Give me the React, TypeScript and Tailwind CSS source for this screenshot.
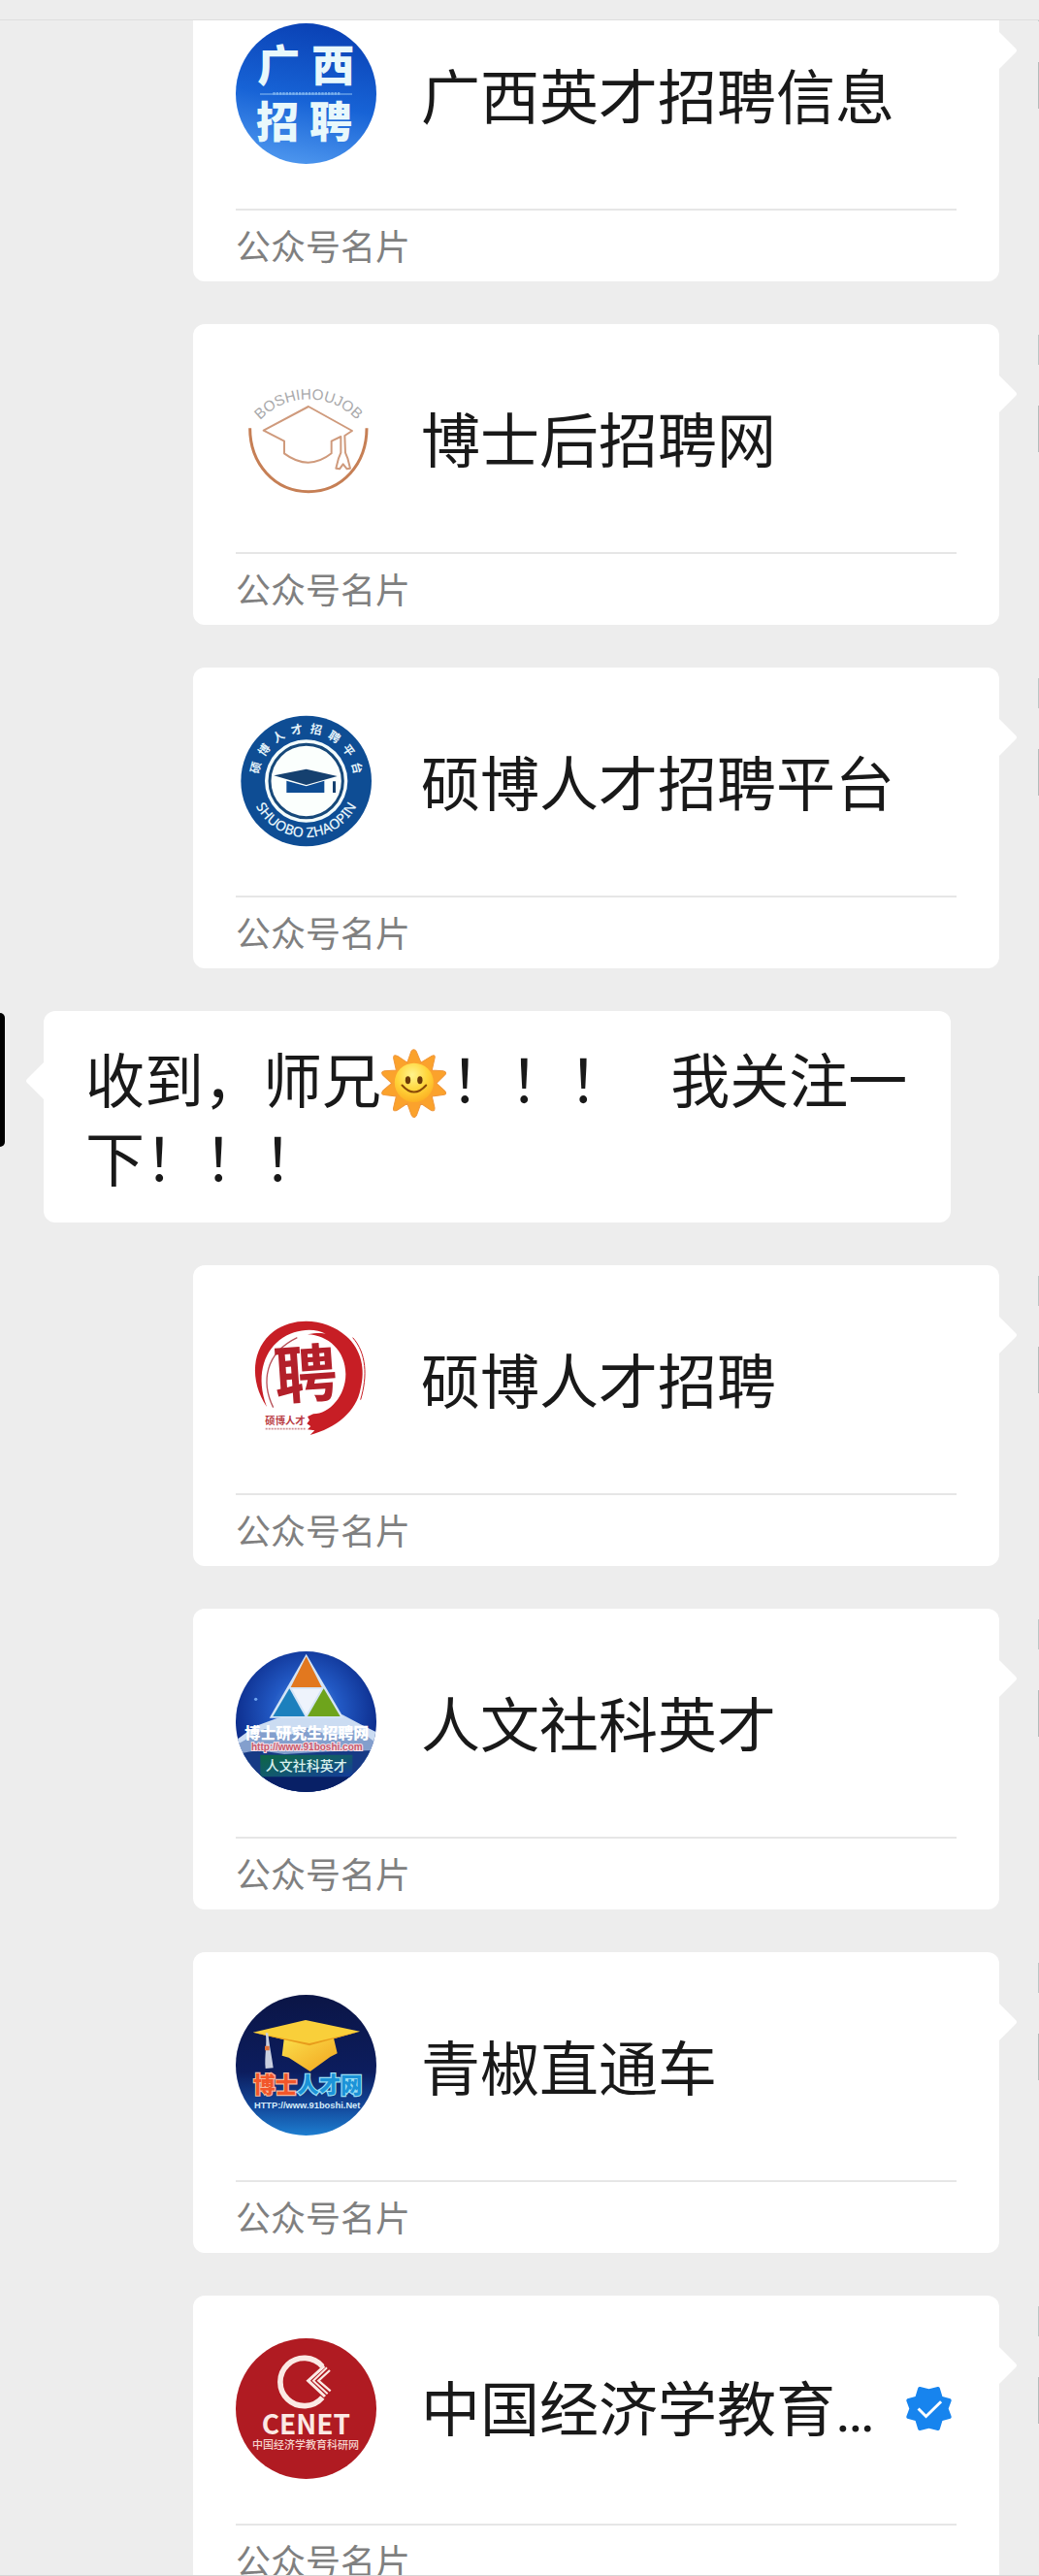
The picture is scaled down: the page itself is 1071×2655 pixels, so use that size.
import type { ReactNode } from 'react';

interface IAccount {
  id: string,
  name: string,
  logo: ReactNode,
  verified?: boolean,
  truncated?: boolean
}

const SANS = '"Noto Sans CJK SC", sans-serif';

const LogoSvg = ({ title, children }: { title: string, children: ReactNode }) => (
  <svg viewBox="0 0 435 435" className="size-[145px] shrink-0 rounded-full" role="img" aria-label={title} fontFamily={SANS}>
    {children}
  </svg>
);

const GuangxiLogo = () => (
  <LogoSvg title="广西招聘">
    <defs>
      <linearGradient id="guangxi" x1="0.6" y1="0" x2="0.4" y2="1">
        <stop offset="0" stopColor="#0a41b4" />
        <stop offset="0.55" stopColor="#1763d6" />
        <stop offset="1" stopColor="#4d96ee" />
      </linearGradient>
    </defs>
    <rect width="435" height="435" fill="url(#guangxi)" />
    <g fill="#e8f8fb" fontWeight="900" fontSize="132" textAnchor="middle">
      <text x="133" y="180">广</text>
      <text x="301" y="180">西</text>
      <text x="129" y="355">招</text>
      <text x="294" y="355">聘</text>
    </g>
    <path d="M75 219H360" stroke="#8fc0f2" strokeWidth="3" />
    <path d="M115 217H322" stroke="#8fc0f2" strokeWidth="8" strokeDasharray="7 3" opacity="0.7" />
  </LogoSvg>
);

const BoshihouLogo = () => (
  <LogoSvg title="BOSHIHOUJOB">
    <path id="boshihou-arc" d="M58 186A206 206 0 0 1 392 186" fill="none" />
    <text fontSize="46" fill="#a9a9ab" fontFamily='"Liberation Sans", sans-serif' textAnchor="middle">
      <textPath href="#boshihou-arc" startOffset="50%">BOSHIHOUJOB</textPath>
    </text>
    <g fill="none" strokeLinejoin="round">
      <path d="M44 190C44 300 120 386 225 386S405 300 405 190" stroke="#c67f55" strokeWidth="9" />
      <path
        d="M225 123L86 197L150 230V268Q225 324 296 268V230L325 216L325 266L318 283L310 314L321 316L332 301L344 316L354 314L346 283L339 266L337 213L360 198Z"
        stroke="#cf9a7c"
        strokeWidth="6"
      />
    </g>
  </LogoSvg>
);

const PlatformLogo = () => (
  <LogoSvg title="硕博人才招聘平台">
    <circle cx="218" cy="219" r="202" fill="#0e4d94" />
    <circle cx="218" cy="219" r="128" fill="#f3fcfc" />
    <circle cx="218" cy="219" r="113" fill="#fbfffd" stroke="#17497a" strokeWidth="9" />
    <g fill="#e4f3fa" fontSize="36" fontWeight="700" textAnchor="middle">
      {[...'硕博人才招聘平台'].map((char, i) => (
        <text key={char} x="218" y="70" transform={`rotate(${-75 + i * 21.5} 218 219)`}>{char}</text>
      ))}
    </g>
    <path id="shuobo-arc" d="M44 219A174 174 0 0 0 392 219" fill="none" />
    <text fontSize="43" fontWeight="500" fill="#e4f3fa" fontFamily='"Noto Sans", sans-serif' textAnchor="middle">
      <textPath href="#shuobo-arc" startOffset="50%">SHUOBO ZHAOPIN</textPath>
    </text>
    <path d="M157 218L218 235L274 218V255H157Z" fill="#0e4d94" />
    <path d="M118 202L218 182L314 204L218 231Z" fill="#15406f" />
    <path d="M300 220h9v35h-9z" fill="#15406f" />
  </LogoSvg>
);

const BrushLogo = () => (
  <LogoSvg title="聘 硕博人才">
    <path
      d="M96 306C42 225 48 125 118 72C185 25 282 34 342 88C388 128 402 190 386 250C374 320 310 372 230 393L244 379L222 376L232 366L220 358L228 347L222 336L240 328C290 328 340 272 340 205C340 132 285 84 222 82C250 76 270 78 278 80C240 60 180 66 135 100C85 140 62 215 96 306Z"
      fill="#c71e25"
    />
    <path d="M116 308C78 230 90 140 190 92" fill="none" stroke="#b8525a" strokeWidth="4" />
    <path d="M362 92C404 140 408 210 386 284" fill="none" stroke="#c71e25" strokeWidth="3" />
    <text x="216" y="276" fontSize="194" fontWeight="700" fill="#b3202a" textAnchor="middle" transform="rotate(-4 218 215)">聘</text>
    <text x="153" y="361" fontSize="31" fontWeight="700" fill="#b93a42" textAnchor="middle">硕博人才</text>
    <path d="M92 374H215" stroke="#cf8f94" strokeWidth="5" strokeDasharray="6 3" />
  </LogoSvg>
);

const HumanitiesLogo = () => (
  <LogoSvg title="博士研究生招聘网 人文社科英才">
    <defs>
      <radialGradient id="sky" cx="0.5" cy="0.42" r="0.6">
        <stop offset="0" stopColor="#6aa6ee" />
        <stop offset="0.4" stopColor="#2259c4" />
        <stop offset="1" stopColor="#06207c" />
      </radialGradient>
      <linearGradient id="banner" x1="0" y1="0" x2="1" y2="1">
        <stop offset="0" stopColor="#0d6645" />
        <stop offset="0.5" stopColor="#125a6c" />
        <stop offset="1" stopColor="#14399a" />
      </linearGradient>
    </defs>
    <rect width="435" height="435" fill="url(#sky)" />
    <path d="M0 275L60 232L125 208L200 190L330 196L385 225L435 250V350H0Z" fill="#cbdcf2" />
    <path d="M0 290L90 240L160 262L220 236L300 262L380 240L435 285V360H0Z" fill="#6485be" opacity="0.7" />
    <path d="M0 318L70 306L150 318L290 310L435 306V435H0Z" fill="#173a85" />
    <path d="M40 380H400V435H40Z" fill="#082066" />
    <circle cx="62" cy="148" r="5" fill="#6fa4ee" />
    <path d="M218 8L334 206H104Z" fill="#d4e4f6" />
    <path d="M218 16L266 111H170Z" fill="#e2781f" />
    <path d="M166 115L214 201H115Z" fill="#1c80bd" />
    <path d="M272 115L323 201H222Z" fill="#6ea41c" />
    <path d="M174 116H264L218 196Z" fill="#eef3fc" />
    <text x="220" y="271" fontSize="48" fontWeight="900" fill="#fff" textAnchor="middle">博士研究生招聘网</text>
    <text x="220" y="307" fontSize="30" fontWeight="700" fill="#c9596c" stroke="#f1dfe8" paintOrder="stroke" strokeWidth="6" fontFamily='"Liberation Sans", sans-serif' textAnchor="middle">
      http://www.91boshi.com
    </text>
    <path d="M76 320H361V388H76Z" fill="url(#banner)" />
    <text x="218" y="370" fontSize="42" fontWeight="500" fill="#d8f0ee" textAnchor="middle">人文社科英才</text>
  </LogoSvg>
);

const DoctorLogo = () => (
  <LogoSvg title="博士人才网">
    <defs>
      <linearGradient id="night" x1="0" y1="0" x2="0" y2="1">
        <stop offset="0" stopColor="#0b1546" />
        <stop offset="0.55" stopColor="#0c1d5e" />
        <stop offset="0.8" stopColor="#13499c" />
        <stop offset="1" stopColor="#1d7ed0" />
      </linearGradient>
      <linearGradient id="gold" x1="0" y1="0" x2="1" y2="1">
        <stop offset="0" stopColor="#fbe04c" />
        <stop offset="1" stopColor="#f2a41f" />
      </linearGradient>
    </defs>
    <rect width="435" height="435" fill="url(#night)" />
    <path d="M150 130L143 188L164 194L230 237L292 192L314 181L302 130Z" fill="url(#gold)" />
    <path d="M53 116L216 78L384 113L228 157Z" fill="#f9cf3a" />
    <path d="M53 116L228 157L384 113L228 150Z" fill="#e89c1c" />
    <path d="M92 118C98 150 88 190 92 228L116 226C112 190 104 160 100 118Z" fill="#c9cfdf" />
    <path d="M90 158h14v14h-14z" fill="#e0703a" />
    <g fontSize="67" fontWeight="900" paintOrder="stroke" strokeWidth="7">
      <text x="55" y="303" fill="#f2562a" stroke="#f6b79c">博士</text>
      <text x="190" y="303" fill="#1b93d8" stroke="#9be0f5">人才网</text>
    </g>
    <text x="221" y="350" fontSize="28" fontWeight="700" fill="#d5ecfa" fontFamily='"Liberation Sans", sans-serif' textAnchor="middle">
      HTTP://www.91boshi.Net
    </text>
  </LogoSvg>
);

const CenetLogo = () => (
  <LogoSvg title="CENET 中国经济学教育科研网">
    <rect width="435" height="435" fill="#b01b22" />
    <g fill="none" stroke="#fbe9e4">
      <path d="M268 87A74 74 0 1 0 268 183" strokeWidth="17" />
      <path d="M274 86L224 131L276 180" strokeWidth="9" />
      <path d="M282 91L240 131L284 172" strokeWidth="6" />
      <path d="M291 99L256 131L293 163" strokeWidth="7" />
    </g>
    <text x="217" y="298" fontSize="84" fontWeight="700" fill="#fbe9e4" textAnchor="middle">CENET</text>
    <text x="216" y="342" fontSize="33" fontWeight="500" fill="#f6d3cd" textAnchor="middle">中国经济学教育科研网</text>
  </LogoSvg>
);

const SunIcon = () => (
  <svg viewBox="0 0 200 212" className="inline-block align-middle w-[67px] h-[71px] -mt-2 mr-1" role="img" aria-label="太阳">
    <defs>
      <radialGradient id="sun-face" cx="0.45" cy="0.3" r="0.8">
        <stop offset="0" stopColor="#fff48c" />
        <stop offset="0.5" stopColor="#ffd53a" />
        <stop offset="1" stopColor="#fba41c" />
      </radialGradient>
    </defs>
    <path
      d="M92 8Q100-4 108 8L122 42L155 22Q168 16 164 30L156 66L190 68Q206 72 194 82L170 106L194 128Q206 140 190 142L156 146L164 180Q166 196 152 188L122 168L109 204Q101 218 93 204L80 168L50 188Q34 196 38 180L46 146L10 142Q-4 140 6 128L32 106L6 82Q-4 70 10 68L46 66L38 30Q36 16 50 22L80 42Z"
      fill="#fba22c"
      stroke="#f0973a"
      strokeWidth="3"
    />
    <circle cx="101" cy="104" r="60" fill="url(#sun-face)" />
    <ellipse cx="82" cy="96" rx="8" ry="12" fill="#6b3a08" />
    <ellipse cx="119" cy="96" rx="8" ry="12" fill="#6b3a08" />
    <path d="M64 112Q101 154 138 112" fill="none" stroke="#8a4a08" strokeWidth="6" strokeLinecap="round" />
  </svg>
);

const VerifiedBadge = () => (
  <svg viewBox="0 0 142 142" className="size-[47px] shrink-0 mr-[5px]" role="img" aria-label="已认证">
    <path
      d="M44 3L71 10L98 3Q103 2 105 7L113 33L138 40Q142 42 141 47L132 71L141 95Q142 100 138 102L113 109L105 135Q103 140 98 139L71 132L44 139Q39 140 37 135L29 109L4 102Q0 100 1 95L10 71L1 47Q0 42 4 40L29 33L37 7Q39 2 44 3Z"
      fill="#1784ee"
    />
    <path d="M38 71L62 95L109 49" fill="none" stroke="#fff" strokeWidth="9" />
  </svg>
);

const accounts: IAccount[] = [
  { id: 'guangxi', name: '广西英才招聘信息', logo: <GuangxiLogo /> },
  { id: 'boshihou', name: '博士后招聘网', logo: <BoshihouLogo /> },
  { id: 'platform', name: '硕博人才招聘平台', logo: <PlatformLogo /> },
];

const moreAccounts: IAccount[] = [
  { id: 'brush', name: '硕博人才招聘', logo: <BrushLogo /> },
  { id: 'humanities', name: '人文社科英才', logo: <HumanitiesLogo /> },
  { id: 'qingjiao', name: '青椒直通车', logo: <DoctorLogo /> },
  { id: 'cenet', name: '中国经济学教育', logo: <CenetLogo />, verified: true, truncated: true },
];

const CardMessage = ({ name, logo, verified, truncated }: IAccount) => (
  <li className="flex items-start pl-[199px]">
    <div className="relative flex-1 min-w-0 rounded-xl bg-white px-11">
      <svg viewBox="0 0 19 40" className="absolute left-full top-[52px] -ml-px w-[19px] h-10" aria-hidden="true">
        <path d="M0 0L18 18Q20 20 18 22L0 40Z" fill="#fff" />
      </svg>
      <div className="flex items-start gap-[46px] h-[235px] pt-11">
        {logo}
        <div className="flex flex-1 min-w-0 items-center h-[146px]">
          <h2 className="flex-1 min-w-0 whitespace-nowrap text-[61px] leading-[80px]">
            {name}
            {truncated && <span className="font-[Roboto]">…</span>}
          </h2>
          {verified && <VerifiedBadge />}
        </div>
      </div>
      <p className="h-[75px] border-t-2 border-[#e6e6e6] text-[36px] leading-[70px] text-[#808080]">公众号名片</p>
    </div>
    {/* Own avatar, only its edge is on screen */}
    <div className="flex flex-col gap-[42px] ml-10 pt-[11px]">
      <div className="w-px h-[31px] bg-[#bcc6c5]" />
      <div className="w-px h-12 bg-[#b4bcbb]" />
    </div>
  </li>
);

const TextMessage = () => (
  <li className="flex items-start">
    <div className="w-[5px] h-[138px] mt-[2px] rounded-r-md bg-black" />
    <div className="relative flex-1 ml-10 mr-[91px] rounded-xl bg-white pl-[43px] pr-9 pt-[29px] pb-7">
      <svg viewBox="0 0 19 40" className="absolute right-full top-[52px] -mr-px w-[19px] h-10" aria-hidden="true">
        <path d="M19 0L1 18Q-1 20 1 22L19 40Z" fill="#fff" />
      </svg>
      <p className="text-[61px] leading-[80px]">
        收到，师兄<SunIcon />！！！&ensp;&nbsp;我关注一下！！！
      </p>
    </div>
  </li>
);

export default function App() {
  return (
    <div className="flex flex-col h-screen bg-[#ededed] text-[#191919] font-['Noto_Sans_CJK_SC',sans-serif]">
      <header className="h-[21px] shrink-0 border-b border-[#dedede]" />
      {/* Messages */}
      <main className="flex-1 min-h-0 overflow-hidden">
        <ul className="flex flex-col gap-11 -mt-[41px]">
          {accounts.map((account) => (
            <CardMessage key={account.id} {...account} />
          ))}
          <TextMessage />
          {moreAccounts.map((account) => (
            <CardMessage key={account.id} {...account} />
          ))}
        </ul>
      </main>
      <footer className="h-px shrink-0 bg-[#d6d6d6]" />
    </div>
  );
}
